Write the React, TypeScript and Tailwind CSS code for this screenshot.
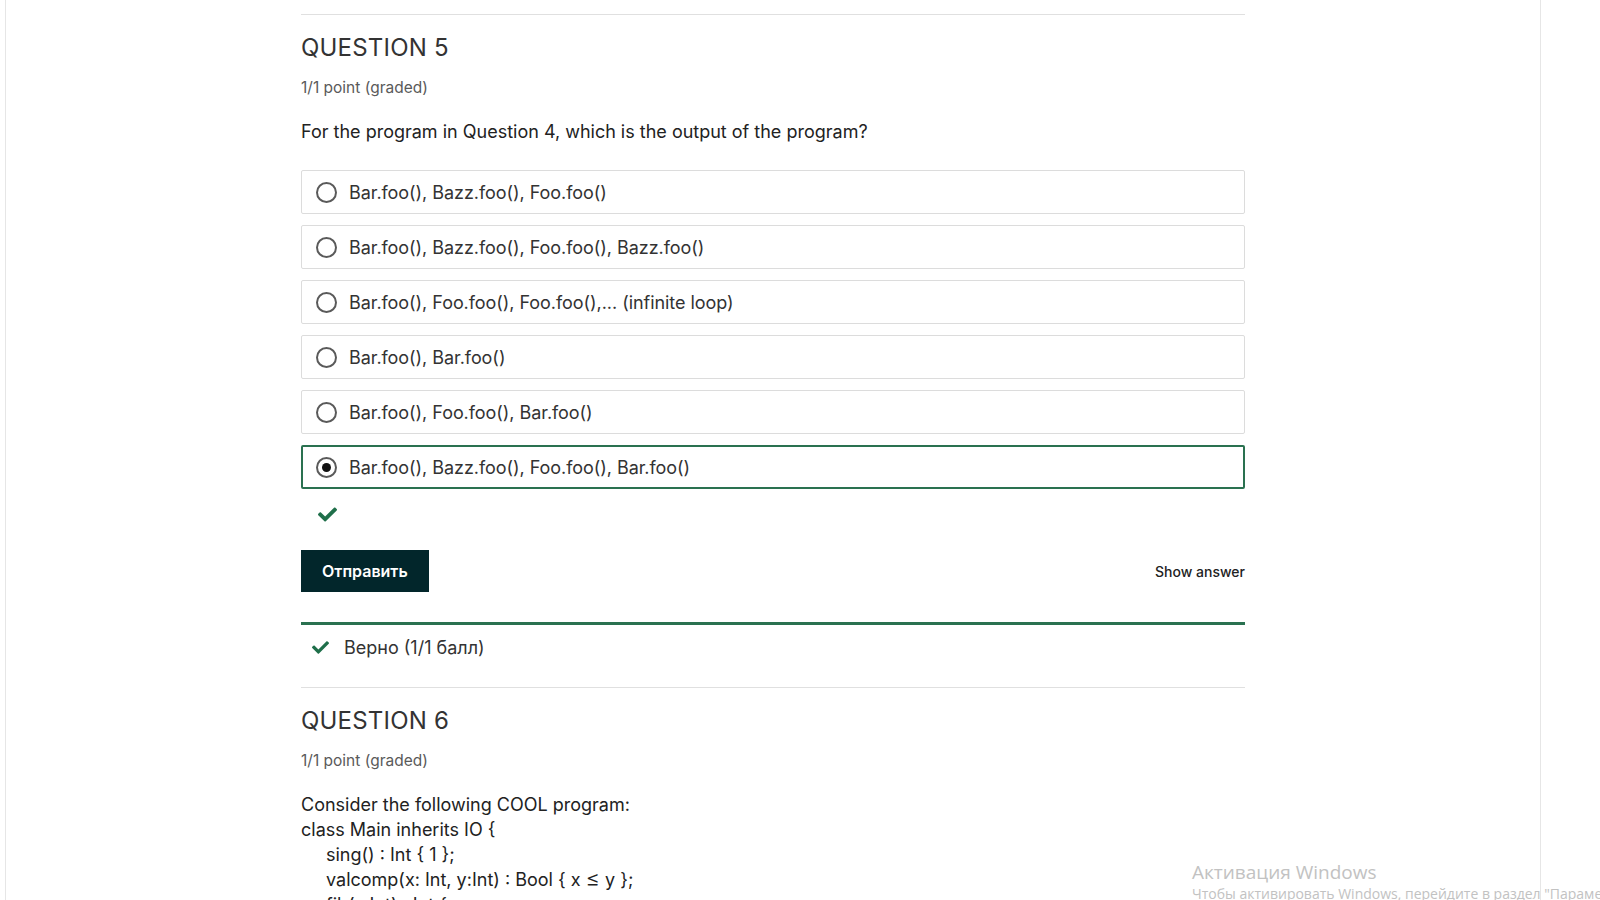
import React from 'react'

const options = [
  'Bar.foo(), Bazz.foo(), Foo.foo()',
  'Bar.foo(), Bazz.foo(), Foo.foo(), Bazz.foo()',
  'Bar.foo(), Foo.foo(), Foo.foo(),... (infinite loop)',
  'Bar.foo(), Bar.foo()',
  'Bar.foo(), Foo.foo(), Bar.foo()',
  'Bar.foo(), Bazz.foo(), Foo.foo(), Bar.foo()',
]

const Check = ({ className }: { className?: string }) => (
  <svg viewBox="0 0 512 512" className={className} fill="currentColor">
    <path d="M173.9 439.4l-166.4-166.4c-10-10-10-26.2 0-36.2l36.2-36.2c10-10 26.2-10 36.2 0L192 312.7 432.1 72.6c10-10 26.2-10 36.2 0l36.2 36.2c10 10 10 26.2 0 36.2L210.1 439.4c-10 10-26.2 10-36.2 0z" />
  </svg>
)

const Option = ({ label, selected }: { label: string; selected?: boolean }) => (
  <div
    className={
      selected
        ? 'h-[44px] flex items-center pl-[13px] border-2 border-[#2a7150] rounded-[2px]'
        : 'h-[44px] flex items-center pl-[14px] border border-[#dcdcdc] rounded-[2px]'
    }
  >
    <span className="w-[21px] h-[21px] rounded-full border-2 border-[#5a5a5a] flex items-center justify-center shrink-0">
      {selected && <span className="w-[9px] h-[9px] rounded-full bg-[#111]" />}
    </span>
    <span className="ml-[12px] text-[18px] text-[#333] tracking-[-0.05px]">{label}</span>
  </div>
)

export default function App() {
  return (
    <div
      className="relative h-[900px] overflow-hidden bg-white"
      style={{ fontFamily: 'Inter, "Noto Sans", sans-serif' }}
    >
      <div className="ml-[5px] w-[1536px] h-full border-x border-[#e6e6e6] pl-[295px]">
        <div className="w-[944px] pt-[14px]">
          <div className="border-t border-[#e0e0e0]" />

          <h2 className="mt-[17px] text-[24px] leading-[32px] text-[#333] tracking-[0.2px]">QUESTION 5</h2>
          <p className="mt-[14px] text-[15.5px] leading-[20px] text-[#5a5a5a]">1/1 point (graded)</p>
          <p className="mt-[22px] text-[18px] leading-[24px] text-[#222]">
            For the program in Question 4, which is the output of the program?
          </p>

          <div className="mt-[26px] flex flex-col gap-[11px]">
            {options.map((o, i) => (
              <Option key={i} label={o} selected={i === options.length - 1} />
            ))}
          </div>

          <div className="h-[61px] flex items-center pl-[17px] pb-[10px]">
            <Check className="w-[19px] h-[19px] text-[#1f6f4a]" />
          </div>

          <div className="flex items-center justify-between">
            <button className="h-[42px] px-[21px] bg-[#02262b] text-white text-[16px] font-semibold">
              Отправить
            </button>
            <span className="text-[14px] font-medium text-[#222]">Show answer</span>
          </div>

          <div className="mt-[30px] border-t-[3px] border-[#2a7150]" />
          <div className="h-[45px] flex items-center pl-[11px]">
            <Check className="w-[17px] h-[17px] text-[#1f6f4a]" />
            <span className="ml-[15px] text-[18px] text-[#333]">Верно (1/1 балл)</span>
          </div>
          <div className="mt-[17px] border-t border-[#e0e0e0]" />

          <h2 className="mt-[17px] text-[24px] leading-[32px] text-[#333] tracking-[0.2px]">QUESTION 6</h2>
          <p className="mt-[14px] text-[15.5px] leading-[20px] text-[#5a5a5a]">1/1 point (graded)</p>
          <div className="mt-[21px] text-[18px] leading-[25px] text-[#222]">
            <p>Consider the following COOL program:</p>
            <p>class Main inherits IO {'{'}</p>
            <p className="pl-[25px]">sing() : Int {'{'} 1 {'}'};</p>
            <p className="pl-[25px]">
              valcomp(x: Int, y:Int) : Bool {'{'} x{' '}
              <span className="text-[22px] leading-[20px] font-light">≤</span> y {'}'};
            </p>
            <p className="pl-[25px]">fib(x:Int) : Int {'{'}</p>
          </div>
        </div>
      </div>

      <div
        className="absolute left-[1192px] top-[860px] text-[#c2c2c2] whitespace-nowrap"
        style={{ fontFamily: '"Open Sans", "Noto Sans", sans-serif' }}
      >
        <div className="text-[19px] leading-[25px]">Активация Windows</div>
        <div className="text-[14px] leading-[18px]">Чтобы активировать Windows, перейдите в раздел "Параметры".</div>
      </div>
    </div>
  )
}
